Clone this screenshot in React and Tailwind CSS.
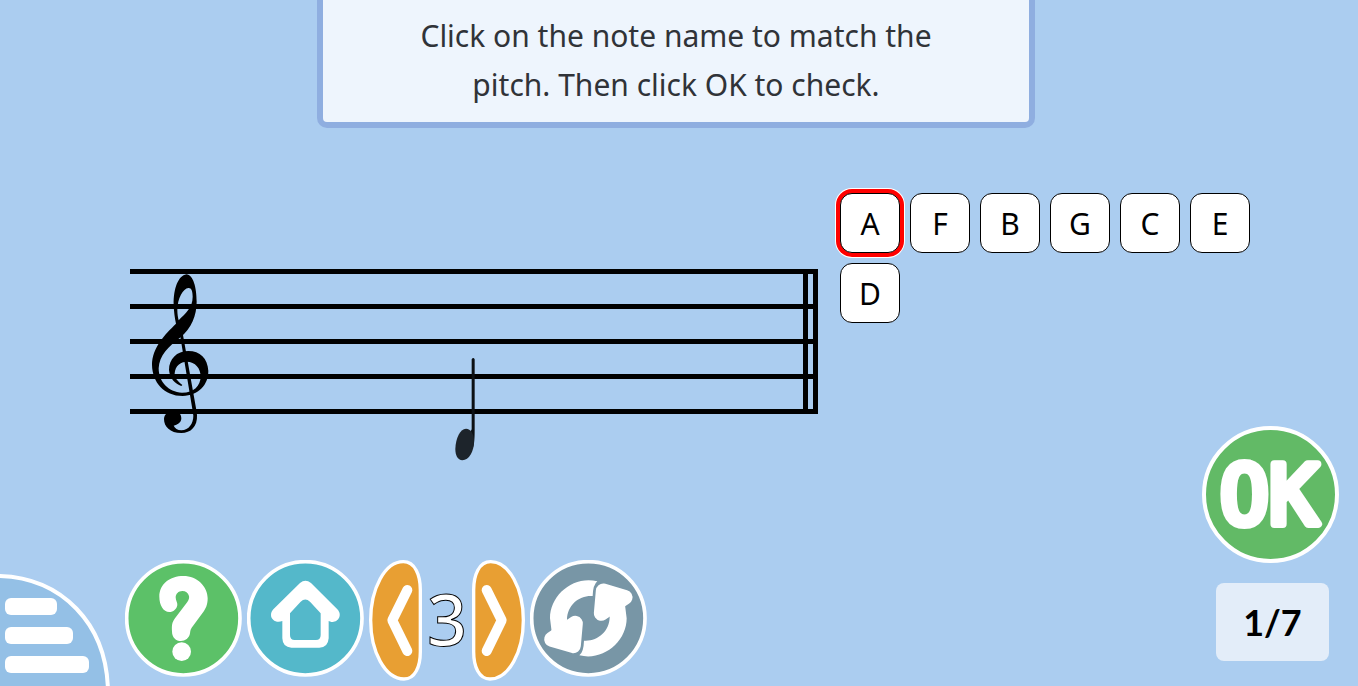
import { useState } from 'react';

const NOTES = ['A', 'F', 'B', 'G', 'C', 'E', 'D'];

function TrebleClef() {
  return (
    <svg viewBox="90 51 180 489" className="absolute left-[20px] top-[3px] h-[163px] w-[60px]" aria-label="Treble clef">
      <path
        fillRule="evenodd"
        d="M199 58C175 62 160 100 161 150C162 172 164 188 168 206C135 238 96 278 96 330C97 382 132 423 188 423C236 421 265 390 265 348C263 310 240 288 205 288C170 288 147 312 147 345C149 371 166 387 184 393L187 390C172 378 163 368 164 355C166 332 182 320 200 320C226 320 242 340 242 365C241 392 222 413 186 413C145 412 116 380 116 340C118 300 145 275 180 248C215 220 230 180 230 140C230 98 220 60 199 58ZM205 99C190 100 172 130 172 165C172 178 174 188 176 196C195 175 218 160 218 125C218 108 214 98 205 99Z"
      />
      <path d="M231 480C233 515 212 534 184 534C150 534 132 515 132 492C132 478 145 467 158 467C175 468 184 476 184 490C184 503 172 510 161 512C165 520 172 526 184 526C207 525 220 505 220 482L217 462L180 240L189 240L229 465Z" />
    </svg>
  );
}

function Staff() {
  return (
    <div className="relative mt-[76px] flex-1">
      <div className="border-b-5 border-black">
        {[0, 1, 2, 3].map((row) => (
          <div key={row} className="h-[35px] border-t-5 border-black" />
        ))}
      </div>
      <div className="absolute inset-y-0 right-0 w-[15px] border-x-5 border-black" />
      <TrebleClef />
      <svg viewBox="72 21 66 315" className="absolute left-[324px] top-[88px] h-[105px] w-[22px]" aria-label="Quarter note">
        <path fill="#0c1014" d="M125 28Q130 20 134 28V240C134 265 133 285 128 296L122 244L125 238Z" />
        <path fill="#1d242b" d="M108 236C122 237 132 250 132 274C132 305 117 331 97 331C83 330 76 316 76 297C77 264 90 237 108 236Z" />
      </svg>
    </div>
  );
}

function HelpIcon() {
  return (
    <svg viewBox="375 0 351 351" className="size-[117px]" aria-hidden="true">
      <circle cx="550" cy="175" r="170" fill="#5cc168" stroke="#fff" strokeWidth="11" />
      <path
        fill="#fff"
        d="M478 110C478 72 510 48 550 48C592 48 623 80 623 115C623 135 617 147 607 160L575 203C570 211 571 215 570 220C568 235 555 243 543 243C528 243 516 232 516 215C515 195 516 188 525 175L562 126C567 119 568 113 567 108C564 98 557 93 547 93C535 93 527 102 527 112C527 122 533 128 532 135C530 148 520 156 508 156C490 156 478 135 478 110Z"
      />
      <circle cx="545" cy="275" r="28" fill="#fff" />
    </svg>
  );
}

function HomeIcon() {
  return (
    <svg viewBox="21 30 351 351" className="size-[117px]" aria-hidden="true">
      <circle cx="196" cy="205" r="170" fill="#54b8ca" stroke="#fff" strokeWidth="11" />
      <path
        fill="#fff"
        fillRule="evenodd"
        d="M180 99Q196 86 213 99L292 178C308 195 295 216 278 216C272 216 268 214 266 213V265Q264 293 238 293H154Q128 292 127 265V213C110 220 93 210 93 195C93 188 96 183 100 178ZM150 190L182 155Q196 142 210 155L242 190V255Q242 270 228 270H164Q150 270 150 255Z"
      />
    </svg>
  );
}

function ArrowIcon({ flipped }) {
  return (
    <svg viewBox="387 30 159 363" className={flipped ? 'h-[121px] w-[53px] -scale-x-100' : 'h-[121px] w-[53px]'} aria-hidden="true">
      <path
        fill="#e89f33"
        stroke="#fff"
        strokeWidth="10"
        d="M490 35C525 35 541 75 541 120V305C541 350 525 387 492 387C435 387 392 305 392 211C392 115 435 35 490 35Z"
      />
      <path d="M502 120L457 211L502 303" fill="none" stroke="#fff" strokeWidth="30" strokeLinecap="round" strokeLinejoin="round" />
    </svg>
  );
}

function RefreshHalf() {
  return (
    <g>
      <path d="M562 94Q549 104 548 138C508 135 472 165 471 208L469 240L425 245L420 205C420 135 490 76 562 94Z" fill="#fff" />
      <path d="M425 268L496 220L490 287Z" fill="#fff" stroke="#fff" strokeWidth="45" strokeLinejoin="round" />
    </g>
  );
}

function RefreshIcon() {
  return (
    <svg viewBox="360 30 351 351" className="size-[117px]" aria-hidden="true">
      <circle cx="535" cy="205" r="170" fill="#7896a6" stroke="#fff" strokeWidth="11" />
      <RefreshHalf />
      <g transform="rotate(180 535 205)">
        <RefreshHalf />
      </g>
    </svg>
  );
}

function MenuIcon() {
  return (
    <svg viewBox="0 0 110 112" className="h-[112px] w-[110px]" aria-hidden="true">
      <path d="M-10 2H0C60 4 108 48 108 120H-10Z" fill="#94c0e6" stroke="#fff" strokeWidth="4" />
      <rect x="5" y="24" width="52" height="17" rx="6" fill="#fff" />
      <rect x="5" y="53" width="68" height="17" rx="6" fill="#fff" />
      <rect x="5" y="82" width="84" height="17" rx="6" fill="#fff" />
    </svg>
  );
}

export default function App() {
  const [selected, setSelected] = useState('A');

  return (
    <div className="flex min-h-screen flex-col overflow-hidden bg-[#abcdf0] font-['Noto_Sans',sans-serif] text-black">
      <header className="flex justify-center pr-1.5">
        <p className="w-full max-w-[718px] rounded-b-[10px] border-6 border-t-0 border-[#8faee0] bg-[#eef5fd] px-20 pb-[13px] pt-[11px] text-center text-[30px] leading-[49px] text-[#303338]">
          Click on the note name to match the pitch. Then click OK to check.
        </p>
      </header>

      <main className="flex items-start gap-[22px] pl-[130px] pr-[98px] pt-[65px]">
        <Staff />
        <div className="flex w-[420px] flex-wrap gap-[10px]">
          {NOTES.map((note) => (
            <button
              key={note}
              type="button"
              aria-pressed={selected === note}
              onClick={() => setSelected(note)}
              className={
                selected === note
                  ? 'size-[60px] rounded-xl border border-black bg-white text-[30px] shadow-[0_0_0_4px_#f00,0_0_0_5px_#fff]'
                  : 'size-[60px] rounded-xl border border-black bg-white text-[30px]'
              }
            >
              {note}
            </button>
          ))}
        </div>
      </main>

      <footer className="mt-auto flex items-end justify-between">
        <nav className="flex items-end">
          <button type="button" aria-label="Menu">
            <MenuIcon />
          </button>
          <div className="ml-[15px] flex items-start gap-[5px] pb-[5px]">
            <button type="button" aria-label="Help"><HelpIcon /></button>
            <a href="#home" aria-label="Home"><HomeIcon /></a>
            <div className="flex items-start">
              <button type="button" aria-label="Previous level"><ArrowIcon /></button>
              <span className="w-[50px] text-center text-[70px] font-medium leading-[118px] text-white [-webkit-text-stroke:1px_black]">3</span>
              <button type="button" aria-label="Next level"><ArrowIcon flipped /></button>
            </div>
            <button type="button" aria-label="Restart"><RefreshIcon /></button>
          </div>
        </nav>

        <div className="flex flex-col items-end gap-5 pb-[25px] pr-[19px]">
          <button type="button" aria-label="OK">
            <svg viewBox="0 0 137 137" className="size-[137px]" aria-hidden="true">
              <circle cx="68.5" cy="68.5" r="66.5" fill="#62ba66" stroke="#fff" strokeWidth="4" />
              <text
                x="67"
                y="98"
                textAnchor="middle"
                fontSize="82"
                fill="#fff"
                stroke="#fff"
                strokeWidth="8"
                strokeLinejoin="round"
                className="font-['DejaVu_Sans_Mono',monospace]"
              >
                OK
              </text>
            </svg>
          </button>
          <output className="mr-[10px] flex h-[78px] w-[113px] items-center justify-center rounded-lg bg-[#e3edf9] font-['Lato',sans-serif] text-[36px] font-bold">
            1/7
          </output>
        </div>
      </footer>
    </div>
  );
}
